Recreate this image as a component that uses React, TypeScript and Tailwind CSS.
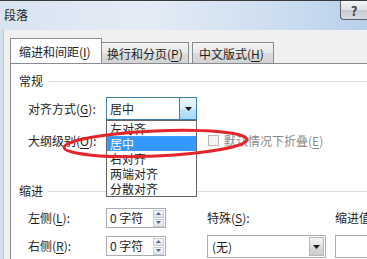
import React from 'react';

function Acc({ k }: { k: string }) {
  return (
    <>
      (<u className="underline-offset-[2px]">{k}</u>)
    </>
  );
}

function Arrow() {
  return (
    <svg width="7" height="4" viewBox="0 0 7 4">
      <path d="M0 0h7L3.5 4z" fill="#1a1a1a" />
    </svg>
  );
}

function SpinBox() {
  return (
    <div className="flex h-[20px] w-[60px] shrink-0 items-center justify-between border border-[#abadb3] bg-white pl-[3px] pr-[1px]">
      <span>0 字符</span>
      <div className="flex flex-col gap-[1px]">
        {['M0 4L3.5 0L7 4z', 'M0 0h7L3.5 4z'].map((d) => (
          <div
            key={d}
            className="flex h-[8px] w-[11px] items-center justify-center border border-[#c5cbd4] bg-[linear-gradient(180deg,#f6f8fb,#dfe5ee)]"
          >
            <svg width="5" height="3" viewBox="0 0 7 4">
              <path d={d} fill="#4f6690" />
            </svg>
          </div>
        ))}
      </div>
    </div>
  );
}

const items = ['左对齐', '居中', '右对齐', '两端对齐', '分散对齐'];

export default function App() {
  return (
    <div className="relative h-[259px] w-[367px] overflow-hidden bg-[#d3dfed] font-['Noto_Sans_CJK_SC',sans-serif] text-[12px] leading-[16px] text-[#1e1e1e]">
      {/* title bar */}
      <div className="flex h-[30px] items-start justify-between border-t border-[#3a3a3a] bg-[linear-gradient(90deg,#d9e4f1_0%,#e4ecf6_40%,#cddef0_75%,#b9d0ea_100%)]">
        <div className="pl-[4px] pt-[6px]">段落</div>
        <div className="flex h-[19px] w-[27px] items-center justify-center rounded-bl-[4px] border-b border-l border-[#5d6168] bg-[linear-gradient(180deg,#f4f5f7_0%,#dde0e5_50%,#c6cbd3_52%,#d6dae0_100%)] text-[13px] font-bold leading-none text-[#3d3f44]">
          ?
        </div>
      </div>

      {/* dialog body */}
      <div className="ml-[3px] h-[229px] border-l border-[#bcc6d2] bg-[#f0f0f0] pl-[6px] pt-[9px]">
        {/* tabs */}
        <div className="flex h-[24px] items-end">
          <div className="relative z-10 h-[25px] w-[92px] shrink-0 border border-b-0 border-[#898c95] bg-white pl-[8px] pt-[5px]">
            缩进和间距<Acc k="I" />
          </div>
          <div className="h-[21px] w-[87px] shrink-0 border-r border-t border-[#898c95] bg-[linear-gradient(180deg,#f3f3f3,#e8e8e8_50%,#dcdcdc_51%,#d3d3d3)] pl-[5px] pt-[3px]">
            换行和分页<Acc k="P" />
          </div>
          <div className="ml-[3px] h-[21px] w-[82px] shrink-0 border border-b-0 border-[#898c95] bg-[linear-gradient(180deg,#f3f3f3,#e8e8e8_50%,#dcdcdc_51%,#d3d3d3)] pl-[6px] pt-[3px]">
            中文版式<Acc k="H" />
          </div>
        </div>

        {/* panel */}
        <div className="h-[210px] overflow-hidden border border-r-0 border-[#898c95] bg-white">
          <div className="mt-[9px] flex items-center pl-[8px]">
            <span>常规</span>
            <div className="ml-[5px] h-px flex-1 bg-[#dcdcdc]" />
          </div>

          <div className="mt-[8px] flex h-[23px] items-center pl-[17px]">
            <span className="w-[78px] shrink-0">
              对齐方式<Acc k="G" />:
            </span>
            <div className="flex h-[23px] w-[91px] shrink-0 items-center justify-between border border-[#3c7fb1] bg-white pl-[3px]">
              <span>居中</span>
              <div className="flex h-full w-[17px] items-center justify-center border-l border-[#3c7fb1] bg-[linear-gradient(180deg,#eaf6fd,#d9f0fc_50%,#bee6fd_51%,#a7d9f5)]">
                <Arrow />
              </div>
            </div>
          </div>

          <div className="mt-[9px] flex h-[23px] items-center pl-[17px]">
            <span className="w-[78px] shrink-0">
              大纲级别<Acc k="O" />:
            </span>
            <div className="w-[91px] shrink-0" />
            <div className="ml-[11px] h-[11px] w-[11px] shrink-0 border border-[#b8b8b8] bg-[#f4f4f4]" />
            <span className="ml-[5px] shrink-0 text-[#8a8a8a]">
              默认情况下折叠<Acc k="E" />
            </span>
          </div>

          <div className="mt-[31px] flex items-center pl-[8px]">
            <span>缩进</span>
            <div className="ml-[5px] h-px flex-1 bg-[#dcdcdc]" />
          </div>

          <div className="mt-[9px] flex h-[20px] items-center pl-[17px]">
            <span className="w-[78px] shrink-0">
              左侧<Acc k="L" />:
            </span>
            <SpinBox />
            <span className="ml-[41px] w-[128px] shrink-0">
              特殊<Acc k="S" />:
            </span>
            <span className="shrink-0 whitespace-nowrap">缩进值</span>
          </div>

          <div className="mt-[8px] flex h-[20px] items-start pl-[17px]">
            <span className="mt-[2px] w-[78px] shrink-0">
              右侧<Acc k="R" />:
            </span>
            <SpinBox />
            <div className="-mt-[1px] ml-[41px] flex h-[23px] w-[119px] shrink-0 items-center justify-between border border-[#abadb3] bg-white pl-[4px] pr-[1px]">
              <span>(无)</span>
              <div className="flex h-[19px] w-[15px] items-center justify-center border border-[#b5b8bf] bg-[linear-gradient(180deg,#f4f4f4,#e4e4e4_50%,#d8d8d8_51%,#cfcfcf)]">
                <Arrow />
              </div>
            </div>
            <div className="-mt-[1px] ml-[9px] h-[23px] w-[60px] shrink-0 border border-[#abadb3] bg-white" />
          </div>
        </div>
      </div>

      {/* open dropdown list */}
      <div className="absolute left-[106px] top-[120px] w-[91px] border border-[#646464] bg-white">
        {items.map((t) => (
          <div
            key={t}
            className={
              t === '居中'
                ? 'h-[15px] border border-dotted border-[#c98a3a] bg-[#3399ff] pl-[2px] text-[12px] leading-[13px] text-white'
                : 'h-[15px] pl-[3px] leading-[15px]'
            }
          >
            {t}
          </div>
        ))}
      </div>

      {/* red annotation ellipse */}
      <svg className="absolute left-[55px] top-[121px]" width="200" height="44" viewBox="0 0 200 44">
        <ellipse
          cx="100.5"
          cy="22.5"
          rx="91.5"
          ry="12.5"
          transform="rotate(-2.5 100.5 22.5)"
          fill="none"
          stroke="#e3262b"
          strokeWidth="3"
        />
      </svg>
    </div>
  );
}
